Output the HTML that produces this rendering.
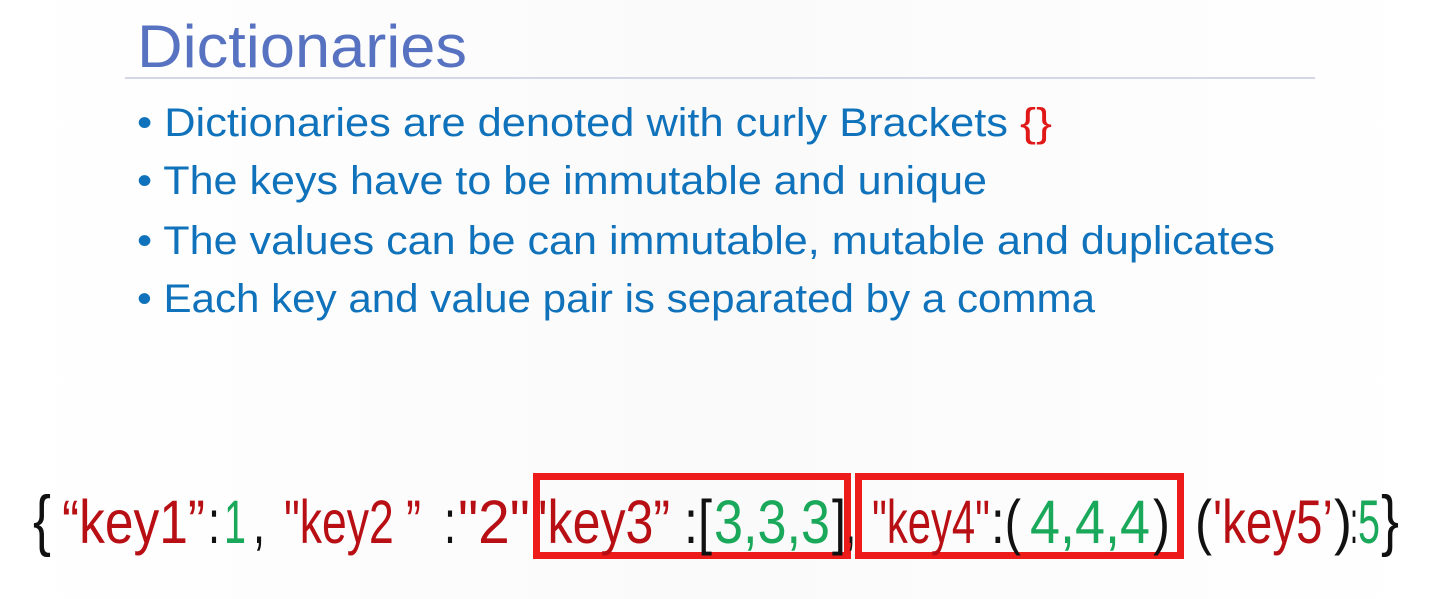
<!DOCTYPE html>
<html><head><meta charset="utf-8"><style>
html,body{margin:0;padding:0;background:#fff;width:1439px;height:599px;overflow:hidden;position:relative;font-family:"Liberation Sans",sans-serif}
.f{position:absolute;line-height:1;white-space:pre;transform-origin:0 0}
.b{color:#0f72bb;font-size:40px}
.r{color:#b80f14}.g{color:#1aa85a}.k{color:#111}
.c{font-size:61px}
.box{position:absolute;border:7px solid #ee1b1b;box-sizing:border-box}
</style></head><body>
<div style="position:absolute;left:0;top:0;width:1439px;height:599px;background:linear-gradient(90deg,#fff 0,#fafafa 50%,#fff 100%)"></div>
<div class="f" style="left:137px;top:17px;font-size:60px;color:#5872c2" w="330">Dictionaries</div>
<div style="position:absolute;left:125px;top:77px;width:1190px;height:2px;background:#d3d7e6"></div>
<div class="f b" style="left:137px;top:103px" w="871">• Dictionaries are denoted with curly Brackets</div>
<div class="f" style="left:1020px;top:103px;font-size:40px;color:#e01818" w="32">{}</div>
<div class="f b" style="left:137px;top:161px" w="850">• The keys have to be immutable and unique</div>
<div class="f b" style="left:137px;top:221px" w="1138">• The values can be can immutable, mutable and duplicates</div>
<div class="f b" style="left:137px;top:279px" w="958">• Each key and value pair is separated by a comma</div>

<div class="box" style="left:533px;top:473px;width:318px;height:86px"></div>
<div class="box" style="left:855px;top:473px;width:329px;height:86px"></div>

<div class="f c k" style="left:33px;top:486px;font-size:68px" w="18">{</div>
<div class="f c r" style="left:62px;top:492px" w="143">“key1”</div>
<div class="f c k" style="left:208px;top:492px" w="12">:</div>
<div class="f c g" style="left:224px;top:492px" w="22">1</div>
<div class="f c k" style="left:253px;top:492px" w="12">,</div>
<div class="f c r" style="left:284px;top:492px" w="137">"key2 ”</div>
<div class="f c k" style="left:444px;top:492px" w="12">:</div>
<div class="f c r" style="left:458px;top:492px" w="72">"2"</div>
<div class="f c r" style="left:538px;top:492px" w="132">'key3”</div>
<div class="f c k" style="left:684px;top:492px" w="28">:[</div>
<div class="f c g" style="left:714px;top:492px" w="116">3,3,3</div>
<div class="f c k" style="left:832px;top:492px" w="14">]</div>
<div class="f c k" style="left:847px;top:492px" w="8">,</div>
<div class="f c r" style="left:872px;top:492px" w="118">"key4"</div>
<div class="f c k" style="left:991px;top:492px" w="30">:(</div>
<div class="f c g" style="left:1030px;top:492px" w="120">4,4,4</div>
<div class="f c k" style="left:1153px;top:492px" w="17">)</div>
<div class="f c k" style="left:1195px;top:492px" w="17">(</div>
<div class="f c r" style="left:1213px;top:492px" w="120">'key5’</div>
<div class="f c k" style="left:1334px;top:492px" w="18">)</div>
<div class="f c k" style="left:1350px;top:492px" w="8">:</div>
<div class="f c g" style="left:1358px;top:492px" w="22">5</div>
<div class="f c k" style="left:1381px;top:486px;font-size:68px" w="18">}</div>
<script>
document.querySelectorAll('.f').forEach(function(e){var w=+e.getAttribute('w');var a=e.getBoundingClientRect().width;if(w&&a)e.style.transform='scaleX('+(w/a)+')';});
</script>
</body></html>
